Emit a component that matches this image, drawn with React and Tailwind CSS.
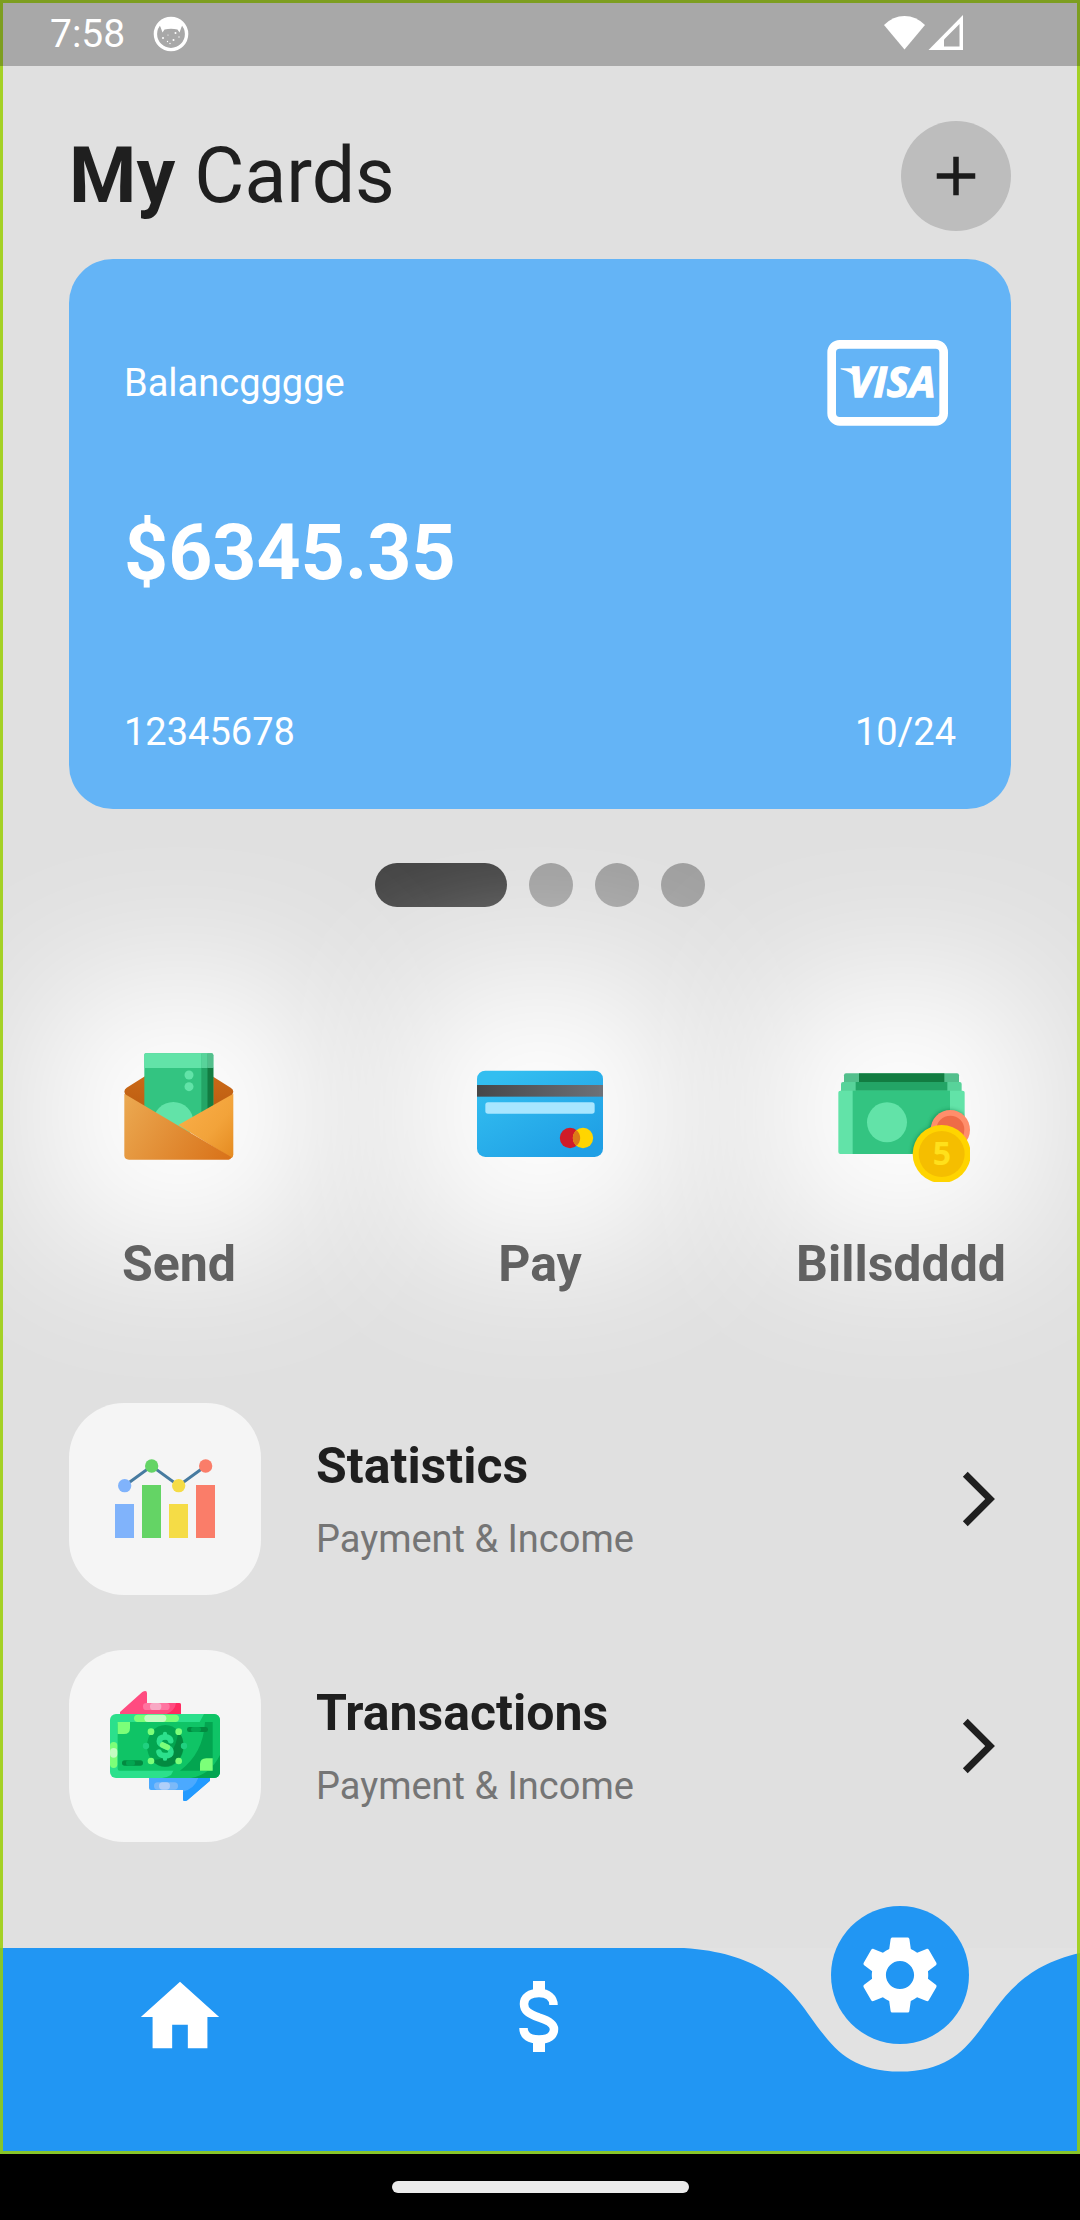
import React from "react";

function AndroidBadge() {
  return (
    <svg viewBox="0 0 36 36" className="size-9" aria-hidden="true">
      <circle cx="18" cy="18" r="15.6" fill="none" stroke="#fff" strokeWidth="3.4" />
      <path d="M6 8C11 1 25 1 30 8L28.5 11L26.5 16.5L24.5 13.5Q18 12 11.500 13.500L9.500 16.500L7.500 11Z" fill="#fff" />
      <g fill="#fff">
        <circle cx="10" cy="22" r="1" />
        <circle cx="14.500" cy="25.500" r=".7" />
        <circle cx="20.500" cy="24" r="1" />
        <circle cx="22.500" cy="17" r="1" />
        <circle cx="26" cy="21" r=".7" />
        <circle cx="15" cy="19" r=".6" />
        <circle cx="17" cy="27.500" r=".7" />
      </g>
    </svg>
  );
}

function StatusBar() {
  return (
    <div className="flex h-[66px] items-start justify-between bg-[#a8a8a8] pr-[116px] pl-[50px] pt-[11px] text-white">
      <div className="flex items-center gap-7">
        <span className="text-[39px] leading-[46px]">7:58</span>
        <AndroidBadge />
      </div>
      <svg viewBox="0 0 80 36" className="mt-1 h-9 w-20" aria-hidden="true">
        <path d="M0 10Q9 1 20.500 1Q32 1 41 10L20.500 34.500Z" fill="#fff" />
        <path d="M44.500 35L79 0V35Z" fill="#fff" />
        <path d="M60 24.500L75.500 9V31.500H60Z" fill="#a8a8a8" />
      </svg>
    </div>
  );
}

function VisaLogo() {
  return (
    <svg viewBox="54 12 414 414" className="size-[138px]" role="img" aria-label="Visa">
      <rect x="95" y="103" width="336" height="231" rx="24" fill="none" stroke="#fff" strokeWidth="26" />
      <path d="M122 175H164L176 214Q156 184 122 178Z" fill="#fff" />
      <text x="146" y="262" fill="#fff" stroke="#fff" strokeWidth="4" fontFamily="'Open Sans', sans-serif" fontWeight="700" fontStyle="italic" fontSize="126">
        VISA
      </text>
    </svg>
  );
}

function BalanceCard() {
  return (
    <section className="mt-7 flex h-[550px] flex-col rounded-[44px] bg-[#64b4f6] px-[55px] pt-[55px] pb-[54px] text-[38px] leading-[45px] text-white">
      <div className="flex items-center justify-between">
        <span>Balancgggge</span>
        <VisaLogo />
      </div>
      <p className="mt-14 text-[77px] leading-[90px] font-bold">$6345.35</p>
      <div className="mt-auto flex justify-between">
        <span>12345678</span>
        <span>10/24</span>
      </div>
    </section>
  );
}

function PageDots() {
  return (
    <div className="mt-[54px] flex justify-center gap-[22px]">
      <button aria-label="Card 1" className="h-11 w-[132px] rounded-full bg-[#424242]" />
      <button aria-label="Card 2" className="size-11 rounded-full bg-[#9e9e9e]" />
      <button aria-label="Card 3" className="size-11 rounded-full bg-[#9e9e9e]" />
      <button aria-label="Card 4" className="size-11 rounded-full bg-[#9e9e9e]" />
    </div>
  );
}

function SendIcon() {
  return (
    <svg viewBox="60 72 414 414" className="size-[138px]" aria-hidden="true">
      <defs>
        <linearGradient id="envFront" x1="103" y1="240" x2="400" y2="430" gradientUnits="userSpaceOnUse">
          <stop offset="0" stopColor="#eba850" />
          <stop offset="1" stopColor="#d9731a" />
        </linearGradient>
        <linearGradient id="envRight" x1="0" y1="0" x2="1" y2="1">
          <stop offset="0" stopColor="#fbb04b" />
          <stop offset=".6" stopColor="#f2a33a" />
          <stop offset="1" stopColor="#e58a20" />
        </linearGradient>
        <linearGradient id="envBack" x1="0" y1="0" x2="0" y2="1">
          <stop offset="0" stopColor="#d3701a" />
          <stop offset="1" stopColor="#b95a10" />
        </linearGradient>
      </defs>
      <path d="M103 215Q103 208 110 203L266 105L422 203Q430 208 430 215L400 300H130Z" fill="url(#envBack)" />
      <path d="M163 104Q163 100 168 100H364Q370 100 370 106V330H163Z" fill="#33c481" />
      <path d="M334 143H352V300H334Z" fill="#23a566" />
      <path d="M352 143H370V300H352Z" fill="#127c41" />
      <path d="M163 144V105Q163 100 168 100H334V144Z" fill="#62e3a8" />
      <path d="M334 100H352V144H334Z" fill="#58d39a" />
      <path d="M352 100H365Q370 100 370 105V144H352Z" fill="#53bf8c" />
      <circle cx="297" cy="165" r="13.500" fill="#62e3a8" />
      <circle cx="297" cy="200" r="13.500" fill="#62e3a8" />
      <circle cx="250" cy="306" r="60" fill="#62e3a8" />
      <path d="M430 221L265 315L424 414Q430 412 430 403Z" fill="url(#envRight)" />
      <path d="M103 221L425 412Q422 419 416 419H117Q103 419 103 406Z" fill="url(#envFront)" />
    </svg>
  );
}

function PayIcon() {
  return (
    <svg viewBox="63 12 414 414" className="size-[138px]" aria-hidden="true">
      <defs>
        <linearGradient id="payCard" x1="180" y1="90" x2="330" y2="370" gradientUnits="userSpaceOnUse">
          <stop offset="0" stopColor="#33bef0" />
          <stop offset="1" stopColor="#1f9fe5" />
        </linearGradient>
        <linearGradient id="payStripe">
          <stop offset="0" stopColor="#464749" />
          <stop offset="1" stopColor="#6d7178" />
        </linearGradient>
      </defs>
      <rect x="81" y="92" width="378" height="259" rx="25" fill="url(#payCard)" />
      <rect x="81" y="135" width="378" height="35" fill="url(#payStripe)" />
      <rect x="106" y="187" width="328" height="34" rx="8" fill="#a8e6ff" />
      <circle cx="360" cy="294" r="30.500" fill="#d01b28" />
      <circle cx="399" cy="294" r="30.500" fill="#ffd500" />
      <path d="M379.500 270.500A30.500 30.500 0 0 1 379.500 317.500A30.500 30.500 0 0 1 379.500 270.500Z" fill="#dc7a18" />
    </svg>
  );
}

function BillsIcon() {
  return (
    <svg viewBox="96 12 414 414" className="size-[138px]" aria-hidden="true">
      <defs>
        <filter id="coinShade" x="-30%" y="-30%" width="160%" height="160%">
          <feGaussianBlur stdDeviation="6" />
        </filter>
        <clipPath id="billClip">
          <path d="M115 152H494V341H115Z" />
        </clipPath>
      </defs>
      <rect x="132" y="100" width="345" height="60" rx="6" fill="#53bf8c" />
      <rect x="177" y="100" width="256" height="30" fill="#127c41" />
      <rect x="123" y="126" width="362" height="60" rx="6" fill="#58d39a" />
      <rect x="167" y="126" width="275" height="30" fill="#23a566" />
      <rect x="115" y="152" width="379" height="190" rx="6" fill="#62e3a8" />
      <rect x="158" y="152" width="292" height="190" fill="#33c481" />
      <circle cx="261" cy="247" r="60" fill="#62e3a8" />
      <g clipPath="url(#billClip)">
        <g filter="url(#coinShade)" fill="#0f6b3a" opacity=".6">
          <circle cx="449" cy="270" r="60" />
          <circle cx="423" cy="342" r="86" />
        </g>
      </g>
      <circle cx="451" cy="269" r="59" fill="#ff8e6b" />
      <circle cx="451" cy="269" r="42" fill="#ee6b47" />
      <circle cx="425" cy="342" r="87" fill="#ffd400" />
      <circle cx="425" cy="342" r="69" fill="#f5be00" />
      <text x="426" y="375" textAnchor="middle" fill="#ffe01b" fontFamily="'Open Sans', sans-serif" fontWeight="700" fontSize="96">
        5
      </text>
    </svg>
  );
}

function Service({ icon, label }) {
  return (
    <button className="relative flex w-[220px] flex-col items-center">
      <span className="relative flex size-[220px] items-center justify-center">
        <span className="absolute -inset-6 rounded-[44px] bg-white blur-[76px]" />
        <span className="relative">{icon}</span>
      </span>
      <span className="relative mt-3 text-[50px] leading-[58px] font-bold text-[#616161]">{label}</span>
    </button>
  );
}

function StatisticsIcon() {
  return (
    <svg viewBox="150 162 330 330" className="size-[110px]" aria-hidden="true">
      <path d="M194 287L275 228L356 287L437 228" fill="none" stroke="#477ba0" strokeWidth="9" />
      <rect x="165" y="342" width="57" height="102" fill="#80b3fb" />
      <rect x="246" y="285" width="57" height="159" fill="#64d465" />
      <rect x="327" y="342" width="57" height="102" fill="#f5dc46" />
      <rect x="408" y="285" width="57" height="159" fill="#fa7d69" />
      <circle cx="194" cy="287" r="20" fill="#80b3fb" />
      <circle cx="275" cy="228" r="20" fill="#64d465" />
      <circle cx="356" cy="287" r="20" fill="#f5dc46" />
      <circle cx="437" cy="228" r="20" fill="#fa7d69" />
    </svg>
  );
}

function TransactionsIcon() {
  return (
    <svg viewBox="150 153 330 330" className="size-[110px]" aria-hidden="true">
      <defs>
        <clipPath id="noteClip">
          <rect x="150" y="222" width="330" height="192" rx="18" />
        </clipPath>
      </defs>
      <path d="M180 223V216L247 156Q261 149 261 160V189H357Q363 189 363 195V223Z" fill="#ff4b80" />
      <path d="M318 223Q345 212 348 189H357Q363 189 363 195V223Z" fill="#ff2a60" />
      <rect x="249" y="189" width="80" height="21" rx="10" fill="#ff74a0" />
      <rect x="270" y="189" width="34" height="21" rx="10" fill="#f8a8c4" />
      <path d="M267 413H450V422L383 480Q369 488 369 477V450H273Q267 450 267 444Z" fill="#4ba9ff" />
      <path d="M415 413H450V422L383 480Q369 488 369 477V455Q405 445 415 413Z" fill="#229aff" />
      <rect x="282" y="427" width="72" height="22" rx="11" fill="#7cb9f8" />
      <rect x="297" y="427" width="33" height="22" rx="11" fill="#b0cff9" />
      <g clipPath="url(#noteClip)">
        <rect x="150" y="222" width="330" height="192" fill="#2ce08c" />
        <path d="M432 222H480V414H306Q320 413 333 405Z" fill="#0fc466" />
        <path d="M480 345V414H393Q450 405 480 345Z" fill="#03a550" />
        <rect x="173" y="246" width="285" height="146" rx="6" fill="#0fc466" />
        <path d="M435 246H458V378Q458 392 444 392H360Q430 340 435 246Z" fill="#03a550" />
        <rect x="222" y="224" width="135" height="22" rx="11" fill="#7cff79" />
        <rect x="253" y="224" width="66" height="22" rx="11" fill="#c3fdc1" />
        <rect x="150" y="306" width="22" height="78" rx="11" fill="#7cff79" />
        <rect x="150" y="324" width="22" height="29" rx="11" fill="#c3fdc1" />
      </g>
      <path d="M173 246H210V264Q210 282 192 282H173Z" fill="#7cff79" />
      <path d="M458 392H420V373Q420 355 439 355H458Z" fill="#7cff79" />
      <rect x="381" y="261" width="63" height="15" rx="7" fill="#038a40" />
      <rect x="393" y="261" width="30" height="15" rx="7" fill="#03a550" />
      <rect x="186" y="361" width="63" height="16" rx="8" fill="#038a40" />
      <rect x="198" y="361" width="27" height="16" rx="8" fill="#03a550" />
      <ellipse cx="316" cy="318" rx="55" ry="63" fill="#03a550" />
      <path d="M355 273A55 63 0 0 1 275 360Q345 362 355 273Z" fill="#038a40" />
      <g fill="#7cff79">
        <circle cx="273" cy="275" r="10" />
        <circle cx="356" cy="275" r="10" />
        <circle cx="273" cy="363" r="10" />
        <circle cx="356" cy="363" r="10" />
      </g>
      <circle cx="258" cy="318" r="9.500" fill="#20d080" />
      <circle cx="372" cy="318" r="9.500" fill="#20d080" />
      <g fill="none" stroke="#2ce08c" strokeLinecap="round">
        <path d="M332 302Q330 291 315 291Q298 291 298 304Q298 313 315 319Q333 325 333 335Q333 347 315 347Q299 347 297 336" strokeWidth="17" />
        <path d="M315 282V292M315 347V356" strokeWidth="13" />
      </g>
      <path d="M308 315L322 322" stroke="#7cff79" strokeWidth="17" strokeLinecap="round" />
    </svg>
  );
}

function ListRow({ icon, title, subtitle }) {
  return (
    <a href="#" className="flex items-center">
      <span className="flex size-[192px] items-center justify-center rounded-[55px] bg-[#f5f5f5]">{icon}</span>
      <span className="ml-[55px] flex flex-1 flex-col gap-[22px]">
        <span className="text-[50px] leading-[58px] font-bold text-[#1f1f1f]">{title}</span>
        <span className="text-[38px] leading-[45px] text-[#757575]">{subtitle}</span>
      </span>
      <svg viewBox="0 0 24 24" className="size-[66px]" aria-hidden="true">
        <path d="M6.49 20.130l1.770 1.770 9.900-9.900-9.900-9.900-1.770 1.770L14.620 12z" fill="#1f1f1f" />
      </svg>
    </a>
  );
}

function HomeIcon() {
  return (
    <svg viewBox="0 0 24 24" className="size-[94px]" aria-hidden="true">
      <path d="M10 20v-6h4v6h5v-8h3L12 3 2 12h3v8z" fill="#fff" />
    </svg>
  );
}

function DollarIcon() {
  return (
    <svg viewBox="492 1970 94 94" className="size-[94px]" aria-hidden="true">
      <path
        d="M552.500 2005C552.500 1998 547 1993 538 1993C529 1993 523 1997 523 2004C523 2011 528 2014 538 2017.500C549 2021 553 2025 553 2029C553 2036 547 2039.500 538 2039.500C529 2039.500 522.500 2036 522.500 2028"
        fill="none"
        stroke="#fff"
        strokeWidth="8.500"
      />
      <path d="M532 1981H544V1991H532ZM532 2042H544V2052H532Z" fill="#fff" />
    </svg>
  );
}

function GearIcon() {
  return (
    <svg viewBox="0 0 24 24" className="size-[94px]" aria-hidden="true">
      <path
        fill="#fff"
        d="M19.140 12.940c.04-.3.06-.61.06-.94 0-.32-.02-.64-.07-.94l2.030-1.580c.18-.14.23-.41.12-.61l-1.920-3.320c-.12-.22-.37-.29-.59-.22l-2.390.96c-.5-.38-1.030-.7-1.620-.94l-.36-2.540c-.04-.24-.24-.41-.48-.41h-3.840c-.24 0-.43.17-.47.41l-.36 2.540c-.59.24-1.130.57-1.620.94l-2.390-.96c-.22-.08-.47 0-.59.22L2.740 8.870c-.12.21-.08.47.12.61l2.030 1.580c-.05.3-.09.63-.09.94s.02.64.07.94l-2.030 1.580c-.18.14-.23.41-.12.61l1.920 3.320c.12.22.37.29.59.22l2.390-.96c.5.38 1.030.7 1.620.94l.36 2.540c.05.24.24.41.48.41h3.840c.24 0 .44-.17.47-.41l.36-2.540c.59-.24 1.130-.56 1.620-.94l2.390.96c.22.08.47 0 .59-.22l1.920-3.320c.12-.22.07-.47-.12-.61l-2.010-1.580zM12 15.600c-1.980 0-3.600-1.620-3.600-3.600s1.620-3.600 3.600-3.600 3.600 1.620 3.600 3.600-1.620 3.600-3.600 3.600z"
      />
    </svg>
  );
}

function BottomNav() {
  return (
    <nav className="relative mt-auto h-[206px] bg-[#e2e2e2]">
      <svg viewBox="0 0 1080 206" preserveAspectRatio="none" className="absolute inset-0 size-full" aria-hidden="true">
        <path d="M0 0H684C835 10 792 123.600 900 123.600S965 10 1116 0V206H0Z" fill="#2196f3" />
      </svg>
      <div className="relative grid grid-cols-3 items-start justify-items-center">
        <button aria-label="Home" className="mt-[22px]">
          <HomeIcon />
        </button>
        <button aria-label="Payments" className="mt-[22px]">
          <DollarIcon />
        </button>
        <button aria-label="Settings" className="-mt-[42px] flex size-[138px] items-center justify-center rounded-full bg-[#2196f3]">
          <GearIcon />
        </button>
      </div>
    </nav>
  );
}

export default function App() {
  return (
    <div className="flex min-h-screen flex-col overflow-hidden bg-black font-['Roboto',sans-serif]">
      <div className="relative flex flex-1 flex-col overflow-hidden bg-[#e0e0e0]">
        <StatusBar />
        <main className="flex flex-col px-[69px] pt-[55px] pb-[106px]">
          <header className="flex items-center justify-between">
            <h1 className="text-[77px] leading-[90px] text-[#1f1f1f]">
              <span className="font-bold">My</span> Cards
            </h1>
            <button aria-label="Add card" className="flex size-[110px] items-center justify-center rounded-full bg-[#bdbdbd]">
              <svg viewBox="0 0 24 24" className="size-[66px]" aria-hidden="true">
                <path d="M19 13h-6v6h-2v-6H5v-2h6V5h2v6h6v2z" fill="#1b1b1b" />
              </svg>
            </button>
          </header>
          <BalanceCard />
          <PageDots />
          <section className="mt-24 flex justify-between">
            <Service icon={<SendIcon />} label="Send" />
            <Service icon={<PayIcon />} label="Pay" />
            <Service icon={<BillsIcon />} label="Billsdddd" />
          </section>
          <section className="relative mt-[110px] flex flex-col gap-[55px]">
            <ListRow icon={<StatisticsIcon />} title="Statistics" subtitle="Payment & Income" />
            <ListRow icon={<TransactionsIcon />} title="Transactions" subtitle="Payment & Income" />
          </section>
        </main>
        <BottomNav />
        <div className="pointer-events-none absolute inset-0 border-3 border-[#99ce05]/85" />
        <div className="pointer-events-none absolute inset-x-0 top-0 h-[66px] border-x-3 border-t-3 border-[#7d9e20]" />
      </div>
      <div className="flex h-[66px] items-center justify-center bg-black">
        <div className="h-3 w-[297px] rounded-full bg-[#ebebeb]" />
      </div>
    </div>
  );
}
